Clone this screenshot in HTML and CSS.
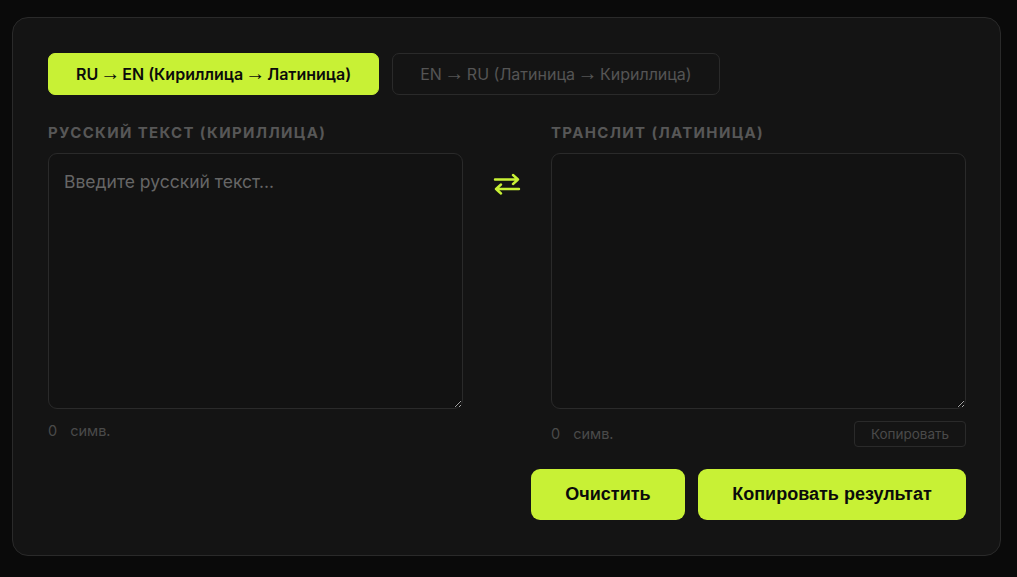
FILE: index.html
```html
<!DOCTYPE html>
<html lang="ru">
<head>
<meta charset="utf-8">
<title>Транслит</title>
<link rel="stylesheet" href="styles.css">
</head>
<body>
<main class="card">
  <div class="tabs">
    <button class="tab tab-active">RU <span class="arr">→</span> EN (Кириллица <span class="arr">→</span> Латиница)</button>
    <button class="tab">EN <span class="arr">→</span> RU (Латиница <span class="arr">→</span> Кириллица)</button>
  </div>
  <div class="panes">
    <div class="pane">
      <div class="label">Русский текст (кириллица)</div>
      <textarea class="field" placeholder="Введите русский текст..."></textarea>
      <div class="meta"><span class="count"><span class="num">0</span>симв.</span></div>
    </div>
    <div class="swap">
      <svg width="28" height="22" viewBox="0 0 28 22" fill="none" stroke="#c8f135" stroke-width="2.4" stroke-linecap="round" stroke-linejoin="round">
        <path d="M2 6.5H25M20 2L25 6.5L20 11"/>
        <path d="M26 16H3M8 11.5L3 16L8 20.5"/>
      </svg>
    </div>
    <div class="pane">
      <div class="label">Транслит (латиница)</div>
      <textarea class="field" readonly></textarea>
      <div class="meta"><span class="count"><span class="num">0</span>симв.</span><button class="copy-small">Копировать</button></div>
    </div>
  </div>
  <div class="actions">
    <button class="action">Очистить</button>
    <button class="action action-wide">Копировать результат</button>
  </div>
</main>
</body>
</html>
```
FILE: styles.css
```css
* { box-sizing: border-box; }
html, body { margin: 0; background: #0a0a0a; }
body {
  padding: 17px 16px 22px 12px;
  font-family: Inter, "Noto Sans", sans-serif;
}
.card {
  background: #141414;
  border: 1px solid #2a2a2a;
  border-radius: 16px;
  padding: 35px 34px 34px 35px;
  height: 539px;
}
.tabs { display: flex; gap: 13px; }
.tab {
  height: 42px;
  border-radius: 7px;
  border: 1px solid #2a2a2a;
  background: transparent;
  color: #555;
  font-family: Inter, sans-serif;
  font-size: 16px;
  padding: 0 27px;
  cursor: pointer;
  white-space: nowrap;
}
.arr {
  font-family: "Liberation Sans", Arial, sans-serif;
  font-weight: 400;
  font-size: 1.25em;
  line-height: 0;
  vertical-align: -0.02em;
  margin: 0 -2px;
}
.tab-active {
  background: #c8f135;
  border-color: #c8f135;
  color: #0b0b0b;
  font-weight: 600;
}
.panes {
  display: grid;
  grid-template-columns: 415px 1fr 415px;
  margin-top: 28px;
}
.label {
  font-size: 15px;
  line-height: 20px;
  font-weight: 700;
  letter-spacing: 1.35px;
  text-transform: uppercase;
  color: #575757;
  margin-bottom: 10px;
  white-space: nowrap;
}
.field {
  display: block;
  width: 100%;
  height: 256px;
  background: #121212;
  border: 1px solid #2a2a2a;
  border-radius: 9px;
  padding: 17px 15px;
  color: #ddd;
  font-family: Inter, sans-serif;
  font-size: 17.5px;
  line-height: 22px;
  resize: vertical;
  outline: none;
}
.field::placeholder { color: #666; }
.swap {
  display: flex;
  justify-content: center;
  padding-top: 50px;
}
.meta {
  display: flex;
  align-items: center;
  justify-content: space-between;
  margin-top: 12px;
  min-height: 20px;
}
.count {
  font-size: 14.5px;
  line-height: 20px;
  color: #4a4a4a;
}
.num { margin-right: 13px; }
.copy-small {
  height: 26px;
  width: 112px;
  background: transparent;
  border: 1px solid #2a2a2a;
  border-radius: 4px;
  color: #4a4a4a;
  font-family: Inter, sans-serif;
  font-size: 13.5px;
  padding: 0;
}
.actions {
  display: flex;
  justify-content: flex-end;
  gap: 13px;
  margin-top: 22px;
}
.action {
  height: 51px;
  width: 154px;
  background: #c8f135;
  border: none;
  border-radius: 9px;
  color: #0b0b0b;
  font-family: "Liberation Sans", Arial, sans-serif;
  font-weight: 700;
  font-size: 18px;
}
.action-wide { width: 268px; }
```
